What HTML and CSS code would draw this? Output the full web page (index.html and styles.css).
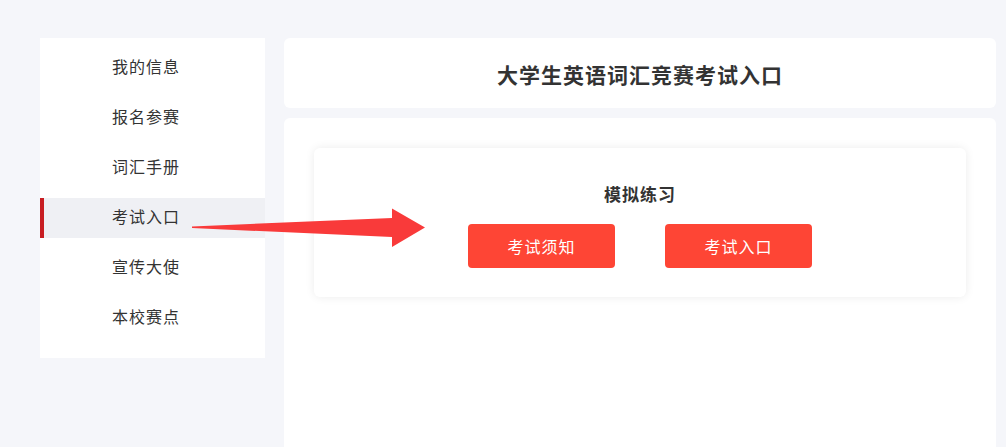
FILE: index.html
```html
<!DOCTYPE html>
<html lang="zh-CN">
<head>
<meta charset="utf-8">
<title>考试入口</title>
<link rel="stylesheet" href="styles.css">
</head>
<body>
<div class="page">
  <aside class="sidebar">
    <div class="menu-item">我的信息</div>
    <div class="menu-item">报名参赛</div>
    <div class="menu-item">词汇手册</div>
    <div class="menu-item active">考试入口</div>
    <div class="menu-item">宣传大使</div>
    <div class="menu-item">本校赛点</div>
  </aside>
  <main class="content">
    <header class="head-card">
      <h1 class="head-title">大学生英语词汇竞赛考试入口</h1>
    </header>
    <section class="main-card">
      <div class="exam-card">
        <h2 class="exam-title">模拟练习</h2>
        <div class="btn-row">
          <button class="btn">考试须知</button>
          <button class="btn">考试入口</button>
        </div>
      </div>
    </section>
  </main>
  <svg class="arrow" width="1006" height="447" viewBox="0 0 1006 447" aria-hidden="true">
    <polygon points="192,226.5 392,218 392,208.5 425,227.5 392,247 392,237 192,228" fill="#f93a3a"/>
  </svg>
</div>
</body>
</html>
```
FILE: styles.css
```css
* { box-sizing: border-box; }
html, body {
  margin: 0;
  padding: 0;
  background: #f5f6fa;
  font-family: "Noto Sans CJK SC", "Noto Sans", sans-serif;
  color: #333;
}
.page {
  position: relative;
  display: flex;
  align-items: flex-start;
  gap: 19px;
  padding: 38px 0 0 40px;
  height: 447px;
  overflow: hidden;
}
.sidebar {
  width: 225px;
  background: #fff;
  padding: 10px 0 20px;
  display: flex;
  flex-direction: column;
  gap: 10px;
}
.menu-item {
  height: 40px;
  line-height: 37px;
  font-size: 16px;
  letter-spacing: 1px;
  color: #333;
  border-left: 4px solid transparent;
  padding-left: 68px;
}
.menu-item.active {
  background: #eff0f4;
  border-left-color: #c81d22;
}
.content {
  width: 712px;
  display: flex;
  flex-direction: column;
  gap: 10px;
}
.head-card {
  height: 70px;
  background: #fff;
  border-radius: 6px;
  display: flex;
  align-items: center;
  justify-content: center;
}
.head-title {
  margin: 0;
  font-size: 21px;
  font-weight: 700;
  letter-spacing: 1px;
  color: #333;
  padding-top: 2px;
}
.main-card {
  background: #fff;
  border-radius: 6px;
  padding: 30px;
  min-height: 340px;
}
.exam-card {
  background: #fff;
  border-radius: 6px;
  box-shadow: 0 0 10px rgba(0, 0, 0, 0.08);
  height: 149px;
  padding-top: 34px;
  display: flex;
  flex-direction: column;
  align-items: center;
}
.exam-title {
  margin: 0;
  height: 24px;
  line-height: 23px;
  font-size: 17px;
  font-weight: 700;
  letter-spacing: 1px;
  color: #333;
}
.btn-row {
  margin-top: 18px;
  display: flex;
  gap: 50px;
}
.btn {
  width: 147px;
  height: 44px;
  border: none;
  border-radius: 4px;
  background: #fe4535;
  color: #fff;
  font-family: inherit;
  font-size: 16px;
  letter-spacing: 1px;
  cursor: pointer;
}
.arrow {
  position: absolute;
  left: 0;
  top: 0;
  pointer-events: none;
}
```
